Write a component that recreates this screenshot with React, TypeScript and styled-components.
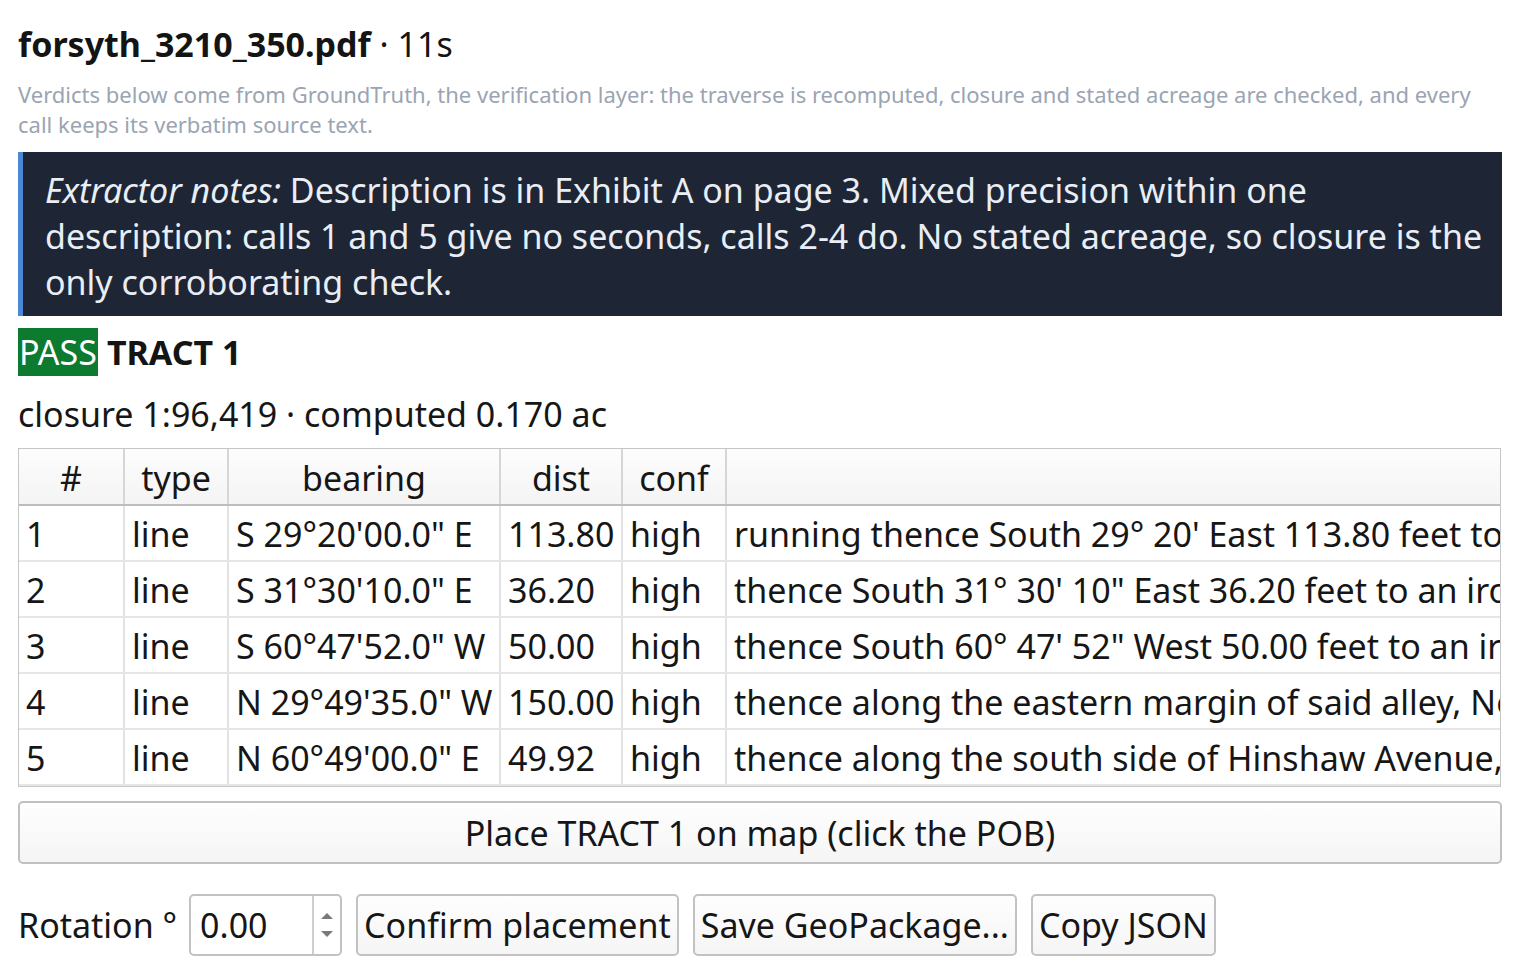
import React from "react";
import styled, { createGlobalStyle } from "styled-components";

const Global = createGlobalStyle`
  html, body { margin: 0; padding: 0; background: #ffffff; }
  body { font-family: "Noto Sans", "Open Sans", sans-serif; color: #161616; }
`;

const Page = styled.div`
  display: flex;
  flex-direction: column;
  padding: 22px 18px 0 18px;
  width: 1484px;
`;

const Title = styled.div`
  font-size: 34px;
  line-height: 44px;
  color: #141414;
  white-space: nowrap;
`;

const TitleFile = styled.span`
  font-weight: 700;
`;

const Subtitle = styled.p`
  margin: 13px 0 0 0;
  font-size: 22px;
  line-height: 30px;
  color: #9aa4b2;
`;

const Notes = styled.div`
  margin-top: 13px;
  background: #1e2535;
  border-left: 5px solid #4a88d6;
  color: #e9eef5;
  font-size: 34px;
  line-height: 46px;
  padding: 15px 6px 11px 22px;
`;

const NotesLabel = styled.em`
  font-style: italic;
`;

const TractHeader = styled.div`
  margin-top: 12px;
  display: flex;
  align-items: center;
  gap: 9px;
  height: 48px;
`;

const Badge = styled.span<{ $tone: "pass" | "fail" }>`
  display: inline-flex;
  align-items: center;
  height: 48px;
  padding: 0 1px;
  background: ${(p) => (p.$tone === "pass" ? "#0c7a2f" : "#b3261e")};
  color: #ffffff;
  font-size: 34px;
  line-height: 48px;
`;

const TractName = styled.span`
  font-size: 34px;
  font-weight: 700;
  color: #141414;
`;

const Closure = styled.div`
  margin-top: 16px;
  font-size: 34px;
  line-height: 44px;
`;

const TableFrame = styled.div`
  margin-top: 12px;
  border: 1px solid #c6c6c6;
  overflow: hidden;
  width: 1481px;
`;

const Table = styled.table`
  border-collapse: collapse;
  table-layout: fixed;
  width: 2300px;
  font-size: 34px;
  white-space: nowrap;
`;

const HeadCell = styled.th`
  height: 53px;
  padding: 2px 8px 0 8px;
  font-weight: 400;
  text-align: center;
  background: linear-gradient(#fdfdfd, #f4f4f4);
  border-right: 2px solid #d6d6d6;
  border-bottom: 2px solid #bdbdbd;
  overflow: hidden;
`;

const Cell = styled.td`
  height: 52px;
  padding: 2px 7px 0 7px;
  border-right: 2px solid #e3e3e3;
  border-bottom: 2px solid #e6e6e6;
  overflow: hidden;
`;

const PlaceButton = styled.button`
  margin-top: 14px;
  height: 63px;
  width: 1484px;
  border: 2px solid #c0c0c0;
  border-radius: 5px;
  background: linear-gradient(#fefefe, #f5f5f5);
  font-family: inherit;
  font-size: 34px;
  color: #161616;
  padding: 0;
`;

const Controls = styled.div`
  margin-top: 30px;
  display: flex;
  align-items: center;
  gap: 14px;
  height: 62px;
`;

const Label = styled.span`
  font-size: 34px;
  margin-right: -2px;
`;

const SpinBox = styled.div`
  display: flex;
  width: 153px;
  height: 62px;
  box-sizing: border-box;
  border: 2px solid #c2c2c2;
  border-radius: 5px;
  background: #ffffff;
`;

const SpinValue = styled.span`
  flex: 1;
  display: flex;
  align-items: center;
  padding-left: 9px;
  font-size: 34px;
`;

const SpinArrows = styled.div`
  width: 26px;
  border-left: 2px solid #cfcfcf;
  display: flex;
  flex-direction: column;
  align-items: center;
  justify-content: center;
  gap: 12px;
`;

const Arrow = styled.span<{ $dir: "up" | "down" }>`
  width: 0;
  height: 0;
  border-left: 6px solid transparent;
  border-right: 6px solid transparent;
  ${(p) =>
    p.$dir === "up"
      ? "border-bottom: 6px solid #7a7a7a;"
      : "border-top: 6px solid #7a7a7a;"}
`;

const ActionButton = styled.button`
  height: 62px;
  box-sizing: border-box;
  padding: 0 6px;
  border: 2px solid #c2c2c2;
  border-radius: 5px;
  background: linear-gradient(#fefefe, #f5f5f5);
  font-family: inherit;
  font-size: 34px;
  color: #161616;
  white-space: nowrap;
`;

const columns = [
  { key: "#", width: 105 },
  { key: "type", width: 104 },
  { key: "bearing", width: 272 },
  { key: "dist", width: 122 },
  { key: "conf", width: 104 },
  { key: "", width: 1593 },
];

const calls = [
  ["1", "line", "S 29°20'00.0\" E", "113.80", "high", "running thence South 29° 20' East 113.80 feet to an iron stake in the line of said lot"],
  ["2", "line", "S 31°30'10.0\" E", "36.20", "high", "thence South 31° 30' 10\" East 36.20 feet to an iron stake, corner of said lot"],
  ["3", "line", "S 60°47'52.0\" W", "50.00", "high", "thence South 60° 47' 52\" West 50.00 feet to an iron stake in the margin of an alley"],
  ["4", "line", "N 29°49'35.0\" W", "150.00", "high", "thence along the eastern margin of said alley, North 29° 49' 35\" West 150.00 feet"],
  ["5", "line", "N 60°49'00.0\" E", "49.92", "high", "thence along the south side of Hinshaw Avenue, North 60° 49' East 49.92 feet to the beginning"],
];

export default function App() {
  return (
    <>
      <Global />
      <Page>
        <Title>
          <TitleFile>forsyth_3210_350.pdf</TitleFile> · 11s
        </Title>
        <Subtitle>
          Verdicts below come from GroundTruth, the verification layer: the traverse is recomputed, closure and stated
          acreage are checked, and every call keeps its verbatim source text.
        </Subtitle>
        <Notes>
          <NotesLabel>Extractor notes:</NotesLabel> Description is in Exhibit A on page 3. Mixed precision within one
          description: calls 1 and 5 give no seconds, calls 2-4 do. No stated acreage, so closure is the only
          corroborating check.
        </Notes>
        <TractHeader>
          <Badge $tone="pass">PASS</Badge>
          <TractName>TRACT 1</TractName>
        </TractHeader>
        <Closure>closure 1:96,419 · computed 0.170 ac</Closure>
        <TableFrame>
          <Table>
            <colgroup>
              {columns.map((c, i) => (
                <col key={i} style={{ width: c.width }} />
              ))}
            </colgroup>
            <thead>
              <tr>
                {columns.map((c, i) => (
                  <HeadCell key={i}>{c.key}</HeadCell>
                ))}
              </tr>
            </thead>
            <tbody>
              {calls.map((row) => (
                <tr key={row[0]}>
                  {row.map((v, i) => (
                    <Cell key={i}>{v}</Cell>
                  ))}
                </tr>
              ))}
            </tbody>
          </Table>
        </TableFrame>
        <PlaceButton>Place TRACT 1 on map (click the POB)</PlaceButton>
        <Controls>
          <Label>Rotation °</Label>
          <SpinBox>
            <SpinValue>0.00</SpinValue>
            <SpinArrows>
              <Arrow $dir="up" />
              <Arrow $dir="down" />
            </SpinArrows>
          </SpinBox>
          <ActionButton>Confirm placement</ActionButton>
          <ActionButton>Save GeoPackage...</ActionButton>
          <ActionButton>Copy JSON</ActionButton>
        </Controls>
      </Page>
    </>
  );
}
